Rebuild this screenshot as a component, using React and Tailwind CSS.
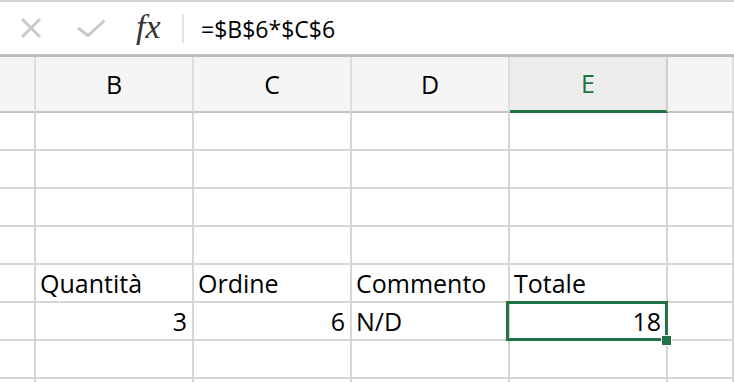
const cols = ['', 'B', 'C', 'D', 'E', ''];

const rows = [
  ['', '', '', '', '', ''],
  ['', '', '', '', '', ''],
  ['', '', '', '', '', ''],
  ['', '', '', '', '', ''],
  ['', 'Quantità', 'Ordine', 'Commento', 'Totale', ''],
  ['', { v: '3', r: true }, { v: '6', r: true }, 'N/D', { v: '18', r: true, sel: true }, ''],
  ['', '', '', '', '', ''],
  ['', '', '', '', '', ''],
];

function Cell({ value }) {
  const v = typeof value === 'object' ? value.v : value;
  const right = typeof value === 'object' && value.r;
  const sel = typeof value === 'object' && value.sel;
  return (
    <div
      className={`relative h-[38px] border-r-2 border-b-2 border-[#d6d6d6] flex items-end pb-[5px] leading-none whitespace-nowrap ${
        right ? 'justify-end pr-[5px]' : 'pl-[4px]'
      } ${sel ? 'z-10' : ''}`}
    >
      {v}
      {sel && (
        <>
          <div className="absolute -left-[4px] -right-[2px] -top-[2px] -bottom-[2px] border-[3px] border-[#217346]" />
          <div className="absolute left-[151px] top-[32px] w-[11px] h-[11px] bg-[#217346] border border-white" />
        </>
      )}
    </div>
  );
}

export default function App() {
  return (
    <div className="w-[734px] h-[382px] overflow-hidden bg-white text-black font-['Open_Sans',sans-serif]">
      {/* Formula bar */}
      <div className="h-[57px] border-t-2 border-t-[#d2d2d2] border-b-[3px] border-b-[#bcbcbc] flex items-center">
        <svg width="22" height="22" viewBox="0 0 22 22" className="ml-[20px]">
          <path d="M2 2L20 20M20 2L2 20" stroke="#c9c9c9" strokeWidth="3" />
        </svg>
        <svg width="30" height="19" viewBox="0 0 30 19" className="ml-[34px] mt-[1px]">
          <polyline points="2,9 12,16.5 28.5,1.5" fill="none" stroke="#c9c9c9" strokeWidth="3" />
        </svg>
        <span className="ml-[30px] w-[34px] font-['Liberation_Serif',serif] italic text-[34px] leading-none text-[#333] mt-[-3px]">
          fx
        </span>
        <div className="ml-[12px] w-[2px] h-[29px] bg-[#e3e3e3]" />
        <span className="ml-[17px] text-[23px] leading-none mt-[3px]">=$B$6*$C$6</span>
      </div>

      {/* Grid */}
      <div className="grid grid-cols-[36px_158px_158px_158px_158px_1fr] text-[25px]">
        {cols.map((c, i) => (
          <div
            key={i}
            className={`h-[56px] flex items-center justify-center leading-none border-r-2 ${
              c === 'E'
                ? 'bg-[#ececec] text-[#217346] border-b-[3px] border-b-[#217346] border-r-[#cfcfcf]'
                : 'bg-[#f5f5f5] border-b-2 border-b-[#c4c4c4] border-r-[#dedede]'
            }`}
          >
            {c}
          </div>
        ))}
        {rows.map((r, ri) => r.map((v, ci) => <Cell key={`${ri}-${ci}`} value={v} />))}
      </div>
    </div>
  );
}
